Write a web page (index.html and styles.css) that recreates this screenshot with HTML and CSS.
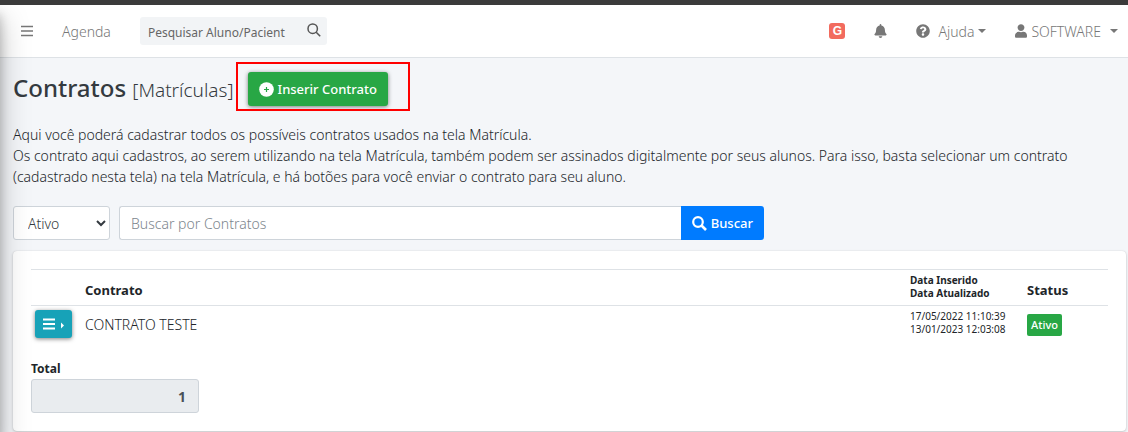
FILE: index.html
```
<!DOCTYPE html>
<html lang="pt-BR">
<head>
    <meta charset="UTF-8">
    <meta name="viewport" content="width=device-width, initial-scale=1.0">
    <title>Contratos</title>
    <link rel="stylesheet" href="styles.css">
</head>
<body>
    <div class="topbar"></div>
    <div class="wrapper">
        <header class="navbar">
            <button type="button" class="nav-button" aria-label="Menu">
                <svg width="14" height="14" viewBox="0 0 14 14"><path d="M1 2.500h12M1 7h12M1 11.500h12" stroke="currentColor" stroke-width="1.500" fill="none"/></svg>
            </button>
            <a href="#agenda" class="nav-link agenda">Agenda</a>
            <form class="nav-search">
                <input type="text" placeholder="Pesquisar Aluno/Pacient" aria-label="Pesquisar Aluno/Paciente">
                <button type="button" aria-label="Pesquisar">
                    <svg width="14" height="14" viewBox="0 0 14 14"><circle cx="5.700" cy="5.700" r="4.700" stroke="currentColor" stroke-width="1.500" fill="none"/><path d="M9.200 9.200l4 4" stroke="currentColor" stroke-width="1.600"/></svg>
                </button>
            </form>
            <nav class="nav-right">
                <a href="#g" class="g-logo">G</a>
                <a href="#avisos" class="nav-link" aria-label="Avisos">
                    <svg width="13" height="14" viewBox="0 0 448 512"><path fill="currentColor" d="M224 512c35.320 0 63.970-28.650 63.970-64H160.030c0 35.350 28.650 64 63.970 64zm215.390-149.710c-19.320-20.760-55.470-51.990-55.470-154.290 0-77.700-54.480-139.900-127.940-155.160V32c0-17.670-14.320-32-31.980-32s-31.980 14.330-31.980 32v20.840C118.560 68.100 64.080 130.300 64.080 208c0 102.300-36.150 133.530-55.470 154.290-6 6.450-8.660 14.160-8.610 21.710.11 16.400 12.980 32 32.100 32h383.800c19.120 0 32-15.600 32.100-32 .05-7.550-2.610-15.270-8.610-21.710z"/></svg>
                </a>
                <a href="#ajuda" class="nav-link">
                    <svg class="help" width="14" height="14" viewBox="0 0 512 512"><path fill="currentColor" d="M504 256c0 136.997-111.043 248-248 248S8 392.997 8 256C8 119.083 119.043 8 256 8s248 111.083 248 248zM262.655 90c-54.497 0-89.255 22.957-116.549 63.758-3.536 5.286-2.353 12.415 2.715 16.258l34.699 26.310c5.205 3.947 12.621 3.008 16.665-2.122 17.864-22.658 30.113-35.797 57.303-35.797 20.429 0 45.698 13.148 45.698 32.958 0 14.976-12.363 22.667-32.534 33.976C247.128 238.528 216 254.941 216 296v4c0 6.627 5.373 12 12 12h56c6.627 0 12-5.373 12-12v-1.333c0-28.462 83.186-29.647 83.186-106.667 0-58.002-60.165-102-116.531-102zM256 338c-25.365 0-46 20.635-46 46 0 25.364 20.635 46 46 46s46-20.636 46-46c0-25.365-20.635-46-46-46z"/></svg>
                    Ajuda<span class="caret"></span>
                </a>
                <a href="#usuario" class="nav-link user">
                    <svg width="12" height="14" viewBox="0 0 448 512"><path fill="currentColor" d="M224 256c70.700 0 128-57.300 128-128S294.700 0 224 0 96 57.300 96 128s57.300 128 128 128zm89.600 32h-16.700c-22.200 10.200-46.900 16-72.900 16s-50.600-5.800-72.900-16h-16.700C60.200 288 0 348.200 0 422.400V464c0 26.500 21.500 48 48 48h352c26.500 0 48-21.500 48-48v-41.600c0-74.200-60.200-134.400-134.400-134.400z"/></svg>
                    SOFTWARE<span class="caret"></span>
                </a>
            </nav>
        </header>

        <main>
            <div class="page-title">
                <h1>Contratos <small>[Matrículas]</small></h1>
                <div class="highlight">
                    <button type="button" class="btn btn-success">
                        <svg width="15" height="15" viewBox="0 0 15 15"><circle cx="7.500" cy="7.500" r="7.300" fill="#fff"/><path d="M7.500 5v5M5 7.500h5" stroke="#28a745" stroke-width="1.200"/></svg>
                        Inserir Contrato
                    </button>
                </div>
            </div>

            <p class="intro">Aqui você poderá cadastrar todos os possíveis contratos usados na tela Matrícula.<br>
            Os contrato aqui cadastros, ao serem utilizando na tela Matrícula, também podem ser assinados digitalmente por seus alunos. Para isso, basta selecionar um contrato (cadastrado nesta tela) na tela Matrícula, e há botões para você enviar o contrato para seu aluno.</p>

            <form class="filters">
                <div class="select-box">
                    <select aria-label="Situação">
                        <option>Ativo</option>
                        <option>Inativo</option>
                    </select>
                    <svg width="10" height="7" viewBox="0 0 10 7"><path d="M1 1l4 4 4-4" stroke="#343a40" stroke-width="2" fill="none"/></svg>
                </div>
                <div class="input-group">
                    <input type="text" placeholder="Buscar por Contratos" aria-label="Buscar por Contratos">
                    <button type="button" class="btn btn-primary">
                        <svg width="15" height="15" viewBox="0 0 15 15"><circle cx="6" cy="6" r="4.800" stroke="#fff" stroke-width="2.200" fill="none"/><path d="M9.500 9.500l4.500 4.500" stroke="#fff" stroke-width="2.600"/></svg>
                        Buscar
                    </button>
                </div>
            </form>

            <section class="card">
                <table>
                    <thead>
                        <tr>
                            <th class="col-menu"></th>
                            <th>Contrato</th>
                            <th class="col-date">Data Inserido<br>Data Atualizado</th>
                            <th class="col-status">Status</th>
                        </tr>
                    </thead>
                    <tbody>
                        <tr>
                            <td class="col-menu">
                                <button type="button" class="btn btn-info" aria-label="Opções">
                                    <svg width="21" height="14" viewBox="0 0 21 14"><path d="M0 2.500h12M0 7h12M0 11.500h12" stroke="#fff" stroke-width="2"/><path d="M18 5.500l3 3-3 3z" fill="#fff"/></svg>
                                </button>
                            </td>
                            <td>CONTRATO TESTE</td>
                            <td class="col-date">17/05/2022 11:10:39<br>13/01/2023 12:03:08</td>
                            <td class="col-status"><span class="badge">Ativo</span></td>
                        </tr>
                    </tbody>
                </table>
                <div class="total">
                    <label for="total">Total</label>
                    <input type="text" id="total" value="1" readonly>
                </div>
            </section>
        </main>
        <div class="sidebar"></div>
    </div>
</body>
</html>
```

FILE: styles.css
```
* {
    box-sizing: border-box;
}
body {
    margin: 0;
    font-family: "Noto Sans", "Open Sans", sans-serif;
    font-size: 14px;
    font-weight: 300;
    line-height: 21px;
    color: #212529;
    background-color: #f4f6f9;
}
button, input, select {
    font-family: inherit;
    font-size: inherit;
    font-weight: inherit;
    margin: 0;
}
svg {
    flex: none;
}
.topbar {
    height: 5px;
    background-color: #3b3b3b;
}
.wrapper {
    position: relative;
    overflow: hidden;
    padding-bottom: 8px;
}
/* collapsed sidebar, only its shadow shows */
.sidebar {
    position: absolute;
    top: 0;
    bottom: 0;
    left: -250px;
    width: 250px;
    box-shadow: 0 14px 28px rgba(0, 0, 0, .25), 0 10px 10px rgba(0, 0, 0, .22);
    pointer-events: none;
}
.navbar {
    display: flex;
    align-items: center;
    height: 53px;
    padding: 0 10px 0 20px;
    background-color: #fff;
    border-bottom: 1px solid #dee2e6;
}
.nav-button {
    display: flex;
    padding: 0;
    border: 0;
    background: none;
    color: #777;
}
.nav-link {
    display: flex;
    align-items: center;
    color: #777;
    text-decoration: none;
}
.agenda {
    margin-left: 28px;
}
.nav-search {
    display: flex;
    width: 187px;
    height: 28px;
    margin-left: 29px;
    border-radius: 3px;
    background-color: #f2f4f6;
}
.nav-search input {
    flex: 1;
    min-width: 0;
    padding: 2px 0 0 8px;
    border: 0;
    background: none;
    font-size: 12px;
    font-weight: 400;
}
.nav-search input::placeholder {
    color: #666;
    opacity: 1;
}
.nav-search button {
    padding: 0 6px;
    border: 0;
    background: none;
    color: #555;
}
.nav-right {
    display: flex;
    align-items: center;
    margin-left: auto;
}
.nav-right .nav-link {
    margin-left: 29px;
}
.g-logo {
    width: 16px;
    height: 16px;
    border-radius: 3px;
    background-color: #f26b5e;
    color: #fff;
    font: bold 12px/16px "Liberation Sans", sans-serif;
    text-align: center;
    text-decoration: none;
}
.help {
    margin-right: 8px;
}
.user svg {
    margin-right: 4px;
}
.caret {
    margin-left: 4px;
    border: 4px solid transparent;
    border-top-color: #777;
    border-bottom: 0;
}
.user .caret {
    margin-left: 9px;
}
main {
    padding: 13px 2px 0 13px;
}
.page-title {
    display: flex;
    align-items: center;
}
h1 {
    margin: 0;
    font-size: 24px;
    line-height: 34px;
    font-weight: 500;
    color: #343a40;
}
h1 small {
    font-size: 19px;
    font-weight: 300;
}
.highlight {
    position: relative;
    margin-left: 14px;
}
.highlight::after {
    content: "";
    position: absolute;
    top: -10px;
    right: -22px;
    bottom: -5px;
    left: -12px;
    border: 2px solid #f00;
    pointer-events: none;
}
.btn {
    display: flex;
    align-items: center;
    gap: 4px;
    height: 34px;
    padding: 0 11px;
    border: 0;
    border-radius: 3px;
    color: #fff;
    font-size: 13px;
    font-weight: 500;
    white-space: nowrap;
}
.btn-success {
    background-color: #28a745;
    box-shadow: 0 1px 4px rgba(0, 0, 0, .5);
}
.btn-primary {
    border-radius: 0 3px 3px 0;
    background-color: #007bff;
}
.btn-info {
    height: 28px;
    padding: 0 8px;
    background-color: #17a2b8;
    box-shadow: 0 1px 4px rgba(0, 0, 0, .5);
}
.intro {
    margin: 17px 40px 19px 0;
}
.filters {
    display: flex;
    gap: 9px;
}
.select-box {
    position: relative;
    width: 97px;
}
.select-box svg {
    position: absolute;
    right: 4px;
    top: 14px;
    pointer-events: none;
}
select {
    width: 100%;
    height: 34px;
    padding: 0 14px;
    border: 1px solid #ced4da;
    border-radius: 3px;
    background-color: #fff;
    color: #343a40;
    appearance: none;
}
.input-group {
    display: flex;
    flex: 0 1 645px;
}
.input-group input {
    flex: 1;
    min-width: 0;
    padding: 0 11px;
    border: 1px solid #ced4da;
    border-right: 0;
    border-radius: 3px 0 0 3px;
}
.input-group input::placeholder {
    color: #7c858d;
    opacity: 1;
}
.card {
    margin-top: 11px;
    padding: 18px;
    border-radius: 4px;
    background-color: #fff;
    box-shadow: 0 0 1px rgba(0, 0, 0, .13), 0 1px 3px rgba(0, 0, 0, .2);
}
table {
    width: 100%;
    border-collapse: collapse;
    table-layout: fixed;
}
th {
    height: 36px;
    padding: 4px;
    border-top: 1px solid #dee2e6;
    border-bottom: 1px solid #dee2e6;
    text-align: left;
    vertical-align: bottom;
    font-size: 13px;
    font-weight: 700;
}
td {
    padding: 4px;
}
.col-menu {
    width: 50px;
}
.col-date {
    width: 117px;
    font-size: 10px;
    line-height: 13px;
}
th.col-date {
    padding-bottom: 5px;
}
td.col-date {
    vertical-align: top;
    font-weight: 400;
}
.col-status {
    width: 85px;
}
.badge {
    display: inline-block;
    padding: 0 4px;
    border-radius: 2px;
    background-color: #28a745;
    color: #fff;
    font-size: 11px;
    line-height: 22px;
    font-weight: 500;
}
.total {
    width: 168px;
    margin-top: 16px;
}
.total label {
    display: block;
    font-size: 12px;
    font-weight: 700;
}
.total input {
    display: block;
    width: 100%;
    height: 34px;
    padding: 0 12px;
    border: 1px solid #ced4da;
    border-radius: 3px;
    background-color: #e9ecef;
    color: #495057;
    font-weight: 700;
    text-align: right;
}
```
